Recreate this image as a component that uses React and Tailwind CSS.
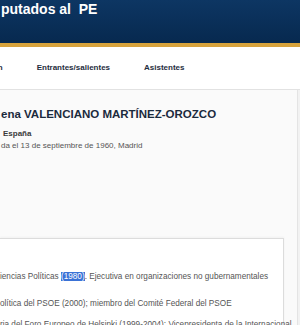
import React from 'react';

const navItems = ['Composición', 'Entrantes/salientes', 'Asistentes'];

const App = () => {
  return (
    <div className="w-[300px] h-[325px] overflow-hidden bg-[#f2f2f2] font-['Liberation_Sans',Arial,sans-serif]">
      {/* Header */}
      <header className="h-[43px] bg-gradient-to-b from-[#0d3663] to-[#07294f] pl-[1px] pt-[1px]">
        <h1 className="text-[14px] leading-[16px] font-bold text-white whitespace-nowrap">putados al&nbsp; PE</h1>
      </header>
      <div className="h-[4px] bg-[#d7a33d]" />

      {/* Nav */}
      <nav className="h-[43px] bg-white border-b border-[#e2e2e2] flex items-center gap-[34px] text-[8px] font-bold text-[#1f2d3d] whitespace-nowrap">
        {navItems.map((item, i) => (
          <span key={item} className={i === 0 ? 'ml-[-48px]' : ''}>{item}</span>
        ))}
      </nav>

      {/* Content */}
      <div className="flex">
        <div className="w-[298px] h-[240px] bg-[#fafafa] border-r border-[#e4e4e4] flex flex-col">
          <section className="h-[148px] shrink-0 pt-[17px] pl-[1px]">
            <h2 className="text-[11.5px] leading-[14px] font-bold text-[#1b2a3d] whitespace-nowrap">
              ena VALENCIANO MARTÍNEZ-OROZCO
            </h2>
            <p className="mt-[8px] pl-[2px] text-[8px] leading-[10px] font-bold text-[#3a3a3a]">España</p>
            <p className="mt-[2px] text-[8px] leading-[10px] text-[#555]">
              da el 13 de septiembre de 1960, Madrid
            </p>
          </section>

          <div className="w-[284px] h-[120px] shrink-0 bg-white border border-l-0 border-[#dcdcdc] shadow-[0_-1px_2px_rgba(0,0,0,0.04)] pt-[33px] text-[8.2px] leading-[10px] text-[#555] whitespace-nowrap flex flex-col">
            <p>
              iencias Políticas <span className="bg-[#3a72d6] text-white">(1980)</span>. Ejecutiva en organizaciones no gubernamentales
            </p>
            <p className="mt-[17px]">olítica del PSOE (2000); miembro del Comité Federal del PSOE</p>
            <p className="mt-[11px]">ria del Foro Europeo de Helsinki (1999-2004); Vicepresidenta de la Internacional</p>
          </div>
        </div>
      </div>
    </div>
  );
};

export default App;
